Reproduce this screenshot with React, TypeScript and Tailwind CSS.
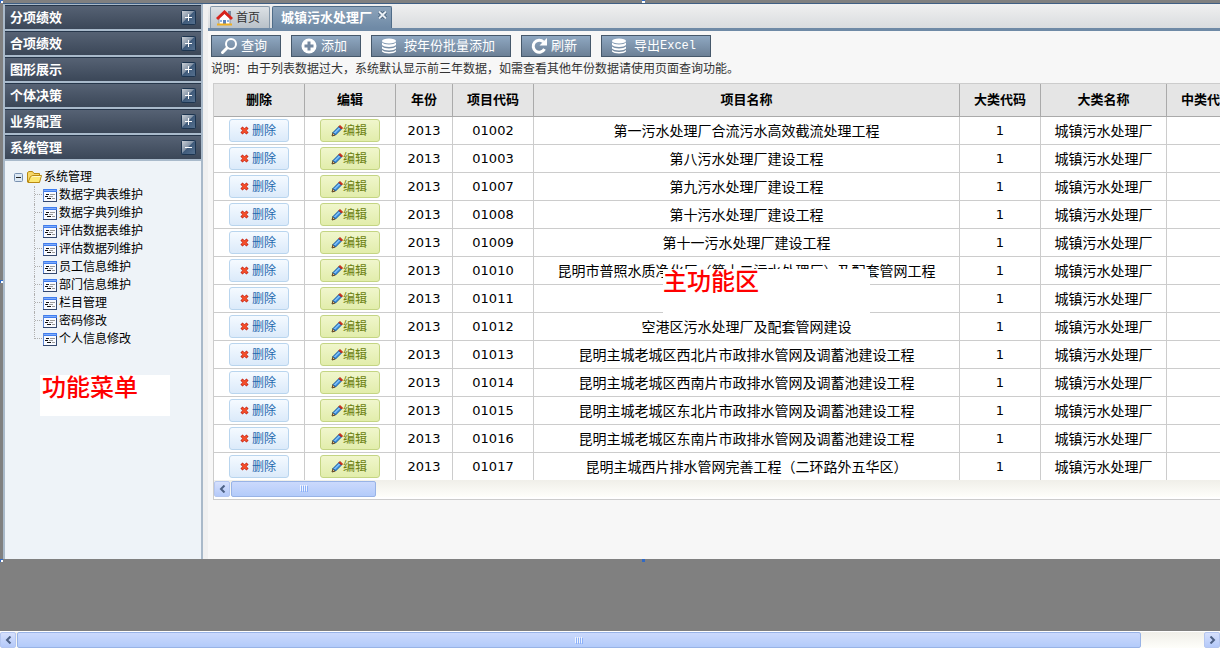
import type { ReactNode } from "react";

const menus = ["分项绩效", "合项绩效", "图形展示", "个体决策", "业务配置", "系统管理"];

const treeItems = [
  "数据字典表维护",
  "数据字典列维护",
  "评估数据表维护",
  "评估数据列维护",
  "员工信息维护",
  "部门信息维护",
  "栏目管理",
  "密码修改",
  "个人信息修改",
];

const headers = ["删除", "编辑", "年份", "项目代码", "项目名称", "大类代码", "大类名称", "中类代码"];

const projects = [
  { code: "01002", name: "第一污水处理厂合流污水高效截流处理工程" },
  { code: "01003", name: "第八污水处理厂建设工程" },
  { code: "01007", name: "第九污水处理厂建设工程" },
  { code: "01008", name: "第十污水处理厂建设工程" },
  { code: "01009", name: "第十一污水处理厂建设工程" },
  { code: "01010", name: "昆明市普照水质净化厂（第十二污水处理厂）及配套管网工程" },
  { code: "01011", name: "" },
  { code: "01012", name: "空港区污水处理厂及配套管网建设" },
  { code: "01013", name: "昆明主城老城区西北片市政排水管网及调蓄池建设工程" },
  { code: "01014", name: "昆明主城老城区西南片市政排水管网及调蓄池建设工程" },
  { code: "01015", name: "昆明主城老城区东北片市政排水管网及调蓄池建设工程" },
  { code: "01016", name: "昆明主城老城区东南片市政排水管网及调蓄池建设工程" },
  { code: "01017", name: "昆明主城西片排水管网完善工程（二环路外五华区）" },
];

function ToggleIcon({ open }: { open: boolean }) {
  return (
    <svg width="15" height="15" viewBox="0 0 15 15">
      <defs>
        <linearGradient id="toggle" x1="0" y1="0" x2="1" y2="1">
          <stop offset="0" stopColor="#d2d6db" />
          <stop offset="0.450" stopColor="#8494a7" />
          <stop offset="0.500" stopColor="#405b7b" />
          <stop offset="1" stopColor="#56718f" />
        </linearGradient>
      </defs>
      <rect x="0.5" y="0.5" width="14" height="14" rx="1" fill="url(#toggle)" stroke="#1d3550" />
      <path d="M4 7.500H11" stroke="#fff" />
      {!open && <path d="M7.500 4V11" stroke="#fff" />}
    </svg>
  );
}

function FolderIcon() {
  return (
    <svg width="16" height="16" viewBox="0 0 16 16">
      <path d="M1.500 13V3.500L3 2.500H6.500L8 4.500H13.500V13Z" fill="#f6d768" stroke="#b98a12" />
      <path d="M2 13.500L4.500 7.500L7 6.500H15.500L13.500 13.500Z" fill="#fde873" stroke="#b98a12" />
      <path d="M5.500 8L7.500 7.500H14.500" fill="none" stroke="#fffad0" />
    </svg>
  );
}

function FormIcon() {
  return (
    <svg width="14" height="13" viewBox="0 0 14 13">
      <rect width="14" height="13" fill="#34486e" />
      <rect x="1" y="1" width="12" height="11" fill="#f8faff" />
      <rect width="14" height="3" fill="#3f7df0" />
      <rect x="1" y="1" width="12" height="1" fill="#7dabfa" />
      <rect width="1" height="12" fill="#5c86d8" />
      <path d="M3 5.500H6M2 7.500H5M4 9.500H8" stroke="#111" />
      <path d="M7 5.500H12M6 7.500H10M9 9.500H12" stroke="#999" />
    </svg>
  );
}

function HomeIcon() {
  return (
    <svg width="17" height="16" viewBox="0 0 17 16">
      <rect x="12" y="1" width="3" height="6" fill="#7a8aa0" />
      <path d="M3 8L8.500 3L14 8V14.500H3Z" fill="#fff" stroke="#8a94a4" />
      <path d="M1 9L8.500 2L16 9" fill="none" stroke="#d8241c" strokeWidth="3" />
      <path d="M7 10H10V14H7Z" fill="#5a7fb8" />
      <path d="M4 10H6V12H4ZM11 10H13V12H11Z" fill="#8fb4e0" />
      <path d="M1 14.500H16" stroke="#f0b020" strokeWidth="2" />
    </svg>
  );
}

function SearchIcon() {
  return (
    <svg width="18" height="18" viewBox="0 0 18 18" fill="none" stroke="#fff">
      <circle cx="11" cy="7" r="5" strokeWidth="2" />
      <path d="M7 11L2.500 15.500" strokeWidth="3" strokeLinecap="round" />
    </svg>
  );
}

function AddIcon() {
  return (
    <svg width="18" height="18" viewBox="0 0 18 18">
      <circle cx="9" cy="9" r="7.500" fill="#fff" />
      <path d="M9 4.500V13.500M4.500 9H13.500" stroke="#7488a0" strokeWidth="3" />
    </svg>
  );
}

function DatabaseIcon() {
  return (
    <svg width="18" height="18" viewBox="0 0 18 18" fill="#fff">
      <ellipse cx="9" cy="4" rx="7" ry="2.500" />
      <path d="M2 5.500C4 8 14 8 16 5.500V8C14 10.500 4 10.500 2 8Z" />
      <path d="M2 9.500C4 12 14 12 16 9.500V11.500C14 14 4 14 2 11.500Z" />
      <path d="M2 13C4 15.500 14 15.500 16 13V14.500C14 17 4 17 2 14.500Z" />
    </svg>
  );
}

function RefreshIcon() {
  return (
    <svg width="18" height="18" viewBox="0 0 18 18">
      <path d="M13.500 5A6 6 0 1 0 14.500 12" fill="none" stroke="#fff" strokeWidth="3" />
      <path d="M17 1V8.500H9.500Z" fill="#fff" />
    </svg>
  );
}

function CrossIcon() {
  return (
    <svg width="9" height="9" viewBox="0 0 9 9">
      <path d="M1.500 1.500L7.500 7.500M7.500 1.500L1.500 7.500" stroke="#c01f10" strokeWidth="3" />
      <path d="M2 2L7 7M7 2L2 7" stroke="#f4502c" strokeWidth="2" />
    </svg>
  );
}

function PencilIcon() {
  return (
    <svg width="12" height="12" viewBox="0 0 12 12">
      <path d="M1 11L2 7.500L4.500 10Z" fill="#e8c080" stroke="#5a4020" />
      <path d="M2 7.500L8 1.500L10.500 4L4.500 10Z" fill="#3f96e8" stroke="#1c5c9c" />
      <path d="M3.500 8L8.500 3" stroke="#b8e0ff" />
      <path d="M8 1.500L9 0.500L11.500 3L10.500 4Z" fill="#e03020" stroke="#b02010" />
    </svg>
  );
}

function Chevron({ right }: { right?: boolean }) {
  return (
    <svg width="7" height="8" viewBox="0 0 7 8" fill="none" stroke="#4d6185" strokeWidth="2">
      <path d={right ? "M1.500 0.500L5 4L1.500 7.500" : "M5.500 0.500L2 4L5.500 7.500"} />
    </svg>
  );
}

function ScrollButton({ right }: { right?: boolean }) {
  return (
    <button
      type="button"
      aria-label={right ? "向右滚动" : "向左滚动"}
      className="flex size-4 shrink-0 items-center justify-center rounded-xs border border-[#b4c6f0] bg-linear-to-b from-[#d6e0fc] to-[#b4c9f9]"
    >
      <Chevron right={right} />
    </button>
  );
}

function ScrollThumb({ className }: { className: string }) {
  return (
    <div
      className={`flex h-4 items-center justify-center rounded-xs border border-[#98b3e6] bg-linear-to-b from-[#cbd9fc] to-[#b3cbfa] ${className}`}
    >
      <svg width="8" height="7" viewBox="0 0 8 7">
        <path d="M0.500 0V6M2.500 0V6M4.500 0V6M6.500 0V6" stroke="#eef4fe" />
        <path d="M1.500 1V7M3.500 1V7M5.500 1V7M7.500 1V7" stroke="#8cb0f8" />
      </svg>
    </div>
  );
}

function ToolButton({ icon, width, children }: { icon: ReactNode; width: string; children: ReactNode }) {
  return (
    <button
      type="button"
      className={`flex h-[22px] shrink-0 items-center border border-[#46586b] bg-linear-to-b from-[#8fa8c2] to-[#6c8096] pl-2 text-[13px] leading-5 text-white ${width}`}
    >
      {icon}
      {children}
    </button>
  );
}

function Sidebar() {
  return (
    <aside className="w-[200px] shrink-0 border-x-2 border-[#a9b9c9] bg-[#eef3f8]">
      <nav className="border-t border-[#a9b9c9]">
        {menus.map((menu, i) => (
          <button
            key={menu}
            type="button"
            className="flex h-[26px] w-full items-center justify-between border-t border-b-2 border-t-[#26364a] border-b-[#a9bacb] bg-linear-to-b from-[#566274] to-[#3b4758] px-[5px] text-[13px] leading-5 font-bold text-white"
          >
            {menu}
            <ToggleIcon open={i === menus.length - 1} />
          </button>
        ))}
      </nav>
      <div className="pt-[7px] text-xs text-black">
        <div className="flex h-[18px] items-center pl-[9px]">
          <svg width="9" height="9" viewBox="0 0 9 9">
            <rect x="0.500" y="0.500" width="8" height="8" rx="1" fill="#dce8f4" stroke="#7890b0" />
            <path d="M2 4.500H7" stroke="#222" />
          </svg>
          <span className="mr-[2px] ml-[3px]">
            <FolderIcon />
          </span>
          系统管理
        </div>
        <ul>
          {treeItems.map((item, i) => (
            <li key={item} className="flex h-[18px] items-center pl-[29px]">
              <span className={i === treeItems.length - 1 ? "h-[18px] w-2" : "h-[18px] w-2 border-l border-dotted border-[#b0b0b0]"}>
                <span
                  className={
                    i === treeItems.length - 1
                      ? "block h-[9px] border-b border-l border-dotted border-[#b0b0b0]"
                      : "block h-[9px] border-b border-dotted border-[#b0b0b0]"
                  }
                />
              </span>
              <a href="#" className="flex items-center gap-[2px] pl-px leading-[18px]">
                <FormIcon />
                {item}
              </a>
            </li>
          ))}
        </ul>
      </div>
      <p className="mt-[27px] mr-[31px] ml-[35px] h-[41px] bg-white pl-[2px] text-2xl leading-[26px] font-medium text-[#ff0000]">
        功能菜单
      </p>
    </aside>
  );
}

function ProjectTable() {
  return (
    <table className="w-[1034px] table-fixed border-separate border-spacing-0 text-center text-black">
      <colgroup>
        <col className="w-[91px]" />
        <col className="w-[91px]" />
        <col className="w-[57px]" />
        <col className="w-[81px]" />
        <col className="w-[426px]" />
        <col className="w-[81px]" />
        <col className="w-[126px]" />
        <col className="w-[81px]" />
      </colgroup>
      <thead>
        <tr className="h-[33px] bg-[#e5e5e5]">
          {headers.map((header) => (
            <th key={header} className="border-r border-b border-[#aaa] p-0 text-[13px] leading-5 font-bold">
              {header}
            </th>
          ))}
        </tr>
      </thead>
      <tbody className="[&_td]:h-[28px] [&_td]:border-r [&_td]:border-b [&_td]:border-[#ccc] [&_td]:p-0">
        {projects.map((project) => (
          <tr key={project.code} className="text-sm leading-5">
            <td>
              <button
                type="button"
                className="mx-auto flex h-[23px] w-[60px] items-center gap-[3px] rounded-[3px] border border-[#b9d5ee] bg-linear-to-b from-[#f5faff] to-[#dbeafa] pl-[10px] text-xs text-[#2468ae]"
              >
                <CrossIcon />
                删除
              </button>
            </td>
            <td>
              <button
                type="button"
                className="mx-auto flex h-[23px] w-[60px] items-center rounded-[3px] border border-[#c4d583] bg-linear-to-b from-[#f0f6cc] to-[#e2edab] pl-[10px] text-xs text-[#6b8010]"
              >
                <PencilIcon />
                编辑
              </button>
            </td>
            <td className="text-[13px]">2013</td>
            <td className="text-[13px]">{project.code}</td>
            <td className="whitespace-nowrap">{project.name}</td>
            <td className="text-[13px]">1</td>
            <td>城镇污水处理厂</td>
            <td />
          </tr>
        ))}
      </tbody>
    </table>
  );
}

function Main() {
  return (
    <main className="min-w-0 flex-1 overflow-hidden bg-[#f7f7f7]">
      <div className="flex h-[27px] items-end gap-[2px] border-b-3 border-[#6f8aa6] bg-linear-to-b from-[#f0f0f0] to-[#d9dcdf] pl-[2px]">
        <button
          type="button"
          className="flex h-[22px] w-[60px] items-center gap-[3px] rounded-t-xs border border-b-0 border-[#8598aa] bg-linear-to-b from-[#dce1e5] to-[#b9c1c9] pl-[5px] text-xs text-[#333]"
        >
          <HomeIcon />
          首页
        </button>
        <div className="flex h-[22px] w-[120px] rounded-t-xs border border-b-0 border-[#4f6c88] bg-linear-to-b from-[#8da4bb] to-[#6f8aa6] pl-2">
          <button type="button" className="text-[13px] leading-5 font-bold whitespace-nowrap text-white">
            城镇污水处理厂
          </button>
          <button type="button" aria-label="关闭" className="mt-1 ml-[6px] h-2">
            <svg width="9" height="8" viewBox="0 0 9 8">
              <path d="M1 0.500L8 7.500M8 0.500L1 7.500" stroke="#4c6782" strokeWidth="4" />
              <path d="M1 0.500L8 7.500M8 0.500L1 7.500" stroke="#e8eef4" strokeWidth="2" />
            </svg>
          </button>
        </div>
      </div>
      <div className="flex gap-[10px] pt-1 pl-[3px]">
        <ToolButton width="w-[70px]" icon={<span className="mr-[3px]"><SearchIcon /></span>}>
          查询
        </ToolButton>
        <ToolButton width="w-[70px]" icon={<span className="mr-[3px]"><AddIcon /></span>}>
          添加
        </ToolButton>
        <ToolButton width="w-[140px]" icon={<span className="mr-[6px]"><DatabaseIcon /></span>}>
          按年份批量添加
        </ToolButton>
        <ToolButton width="w-[70px]" icon={<span className="mr-[3px]"><RefreshIcon /></span>}>
          刷新
        </ToolButton>
        <ToolButton width="w-[110px]" icon={<span className="mr-[6px]"><DatabaseIcon /></span>}>
          导出<span className="font-['Liberation_Mono',monospace] text-xs leading-5">Excel</span>
        </ToolButton>
      </div>
      <p className="h-[26px] pl-[3px] text-xs leading-6 whitespace-nowrap text-[#333]">
        说明：由于列表数据过大，系统默认显示前三年数据，如需查看其他年份数据请使用页面查询功能。
      </p>
      <section className="relative ml-[5px] overflow-hidden border-y border-l border-[#ccc] bg-white">
        <div className="h-[396px] overflow-hidden">
          <ProjectTable />
        </div>
        <div className="mb-[2px] flex h-[17px] items-center gap-px bg-linear-to-b from-[#f0efe9] to-[#fefefa]">
          <ScrollButton />
          <ScrollThumb className="w-[145px]" />
        </div>
        <p className="absolute top-[185px] left-[449px] h-[44px] w-[207px] bg-white text-2xl leading-[26px] font-medium text-[#ff0000]">
          主功能区
        </p>
      </section>
    </main>
  );
}

export default function App() {
  return (
    <div className="flex min-h-screen flex-col overflow-hidden bg-[#808080] font-['DejaVu_Sans','Noto_Sans_CJK_SC',sans-serif]">
      <div className="relative flex flex-1 flex-col pt-[3px] pl-[3px]">
        <div className="flex flex-1 gap-[5px] border-t border-[#3f5f84] bg-[#f0f0f0]">
          <Sidebar />
          <Main />
        </div>
        {/* selection handles round the frame */}
        <i className="absolute top-0 left-0 size-[3px] border-t border-l border-[#316ac5] bg-white" />
        <i className="absolute top-0 left-[642px] size-[3px] border-t border-[#316ac5] bg-white" />
        <i className="absolute top-1/2 left-0 size-[3px] border-t border-l border-[#316ac5] bg-white" />
        <i className="absolute -bottom-[3px] left-0 size-[3px] border-t border-l border-[#316ac5] bg-white" />
        <i className="absolute -bottom-[3px] left-[642px] size-[3px] bg-[#316ac5]" />
      </div>
      <div className="h-[72px]" />
      <div className="flex h-[17px] items-center gap-px border-t border-white bg-linear-to-b from-[#f0efe9] to-[#fefefa]">
        <ScrollButton />
        <ScrollThumb className="flex-[1125]" />
        <div className="flex-[61]" />
        <ScrollButton right />
      </div>
    </div>
  );
}
